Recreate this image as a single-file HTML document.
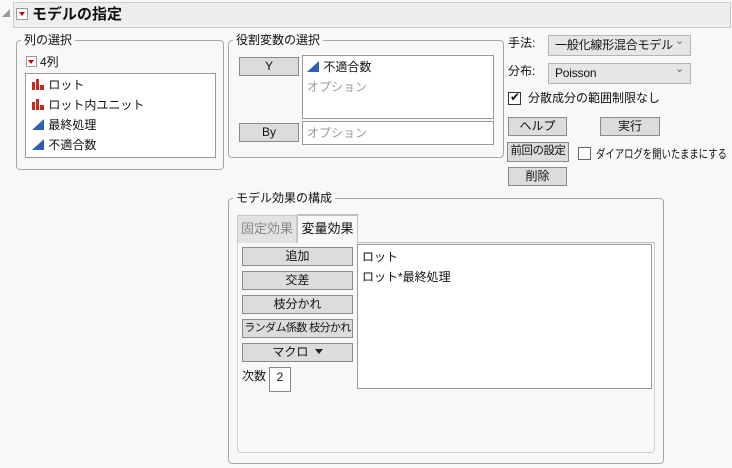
<!DOCTYPE html>
<html><head><meta charset="utf-8"><style>
*{box-sizing:border-box;margin:0;padding:0;white-space:nowrap}
body{width:732px;height:468px;background:#f8f8f8;font-family:"Liberation Sans","Noto Sans CJK JP",sans-serif;font-size:12px;color:#111;position:relative;overflow:hidden}
.a{position:absolute}
.grp{position:absolute;border:1px solid #a8a8a8;border-radius:4px}
.lg{position:absolute;background:#f8f8f8;padding:0 3px;top:-9px;left:4px;font-size:12px;line-height:16px}
.box{position:absolute;background:#fff;border:1px solid #999}
.btn{position:absolute;background:#dcdcdc;border:1px solid #8a8a8a;text-align:center;font-size:12px;line-height:16px;overflow:hidden}
.it{position:absolute;left:6px;line-height:16px}
.dd{position:absolute;background:#e6e6e6;border:1px solid #b4b4b4;line-height:18px;padding-left:6px;font-size:12px;letter-spacing:-0.2px}
.dd:after{content:"⌄";position:absolute;right:6px;top:-4px;color:#666;font-size:11px}
.cb{position:absolute;width:13px;height:13px;background:#fff;border:1px solid #333}
.gray{color:#999}
</style></head><body>
<div class="a" style="left:2px;top:9px;width:0;height:0;border-left:8px solid transparent;border-bottom:8px solid #999"></div>
<div class="a" style="left:13px;top:2px;width:718px;height:26px;background:#eeeeee;border:1px solid #ccc"></div>
<div class="a" style="left:16px;top:8px;width:12px;height:12px;background:#fff;border:1px solid #999"><div class="a" style="left:2px;top:3px;border-left:3px solid transparent;border-right:3px solid transparent;border-top:4px solid #d40000"></div></div>
<div class="a" style="left:32px;top:5px;font-size:15px;font-weight:bold;line-height:20px">モデルの指定</div>

<div class="grp" style="left:16px;top:40px;width:208px;height:130px"><div class="lg">列の選択</div></div>
<div class="a" style="left:26px;top:56px;width:11px;height:11px;background:#fff;border:1px solid #999"><div class="a" style="left:1px;top:3px;border-left:3.5px solid transparent;border-right:3.5px solid transparent;border-top:4px solid #d40000"></div></div>
<div class="a" style="left:40px;top:54px;line-height:16px">4列</div>
<div class="box" style="left:25px;top:73px;width:191px;height:85px">
<div class="it" style="top:3px"><svg width="13" height="11" style="vertical-align:-1px"><rect x="0" y="3" width="3" height="8" fill="#c8281e"/><rect x="4" y="0" width="3" height="11" fill="#c8281e"/><rect x="8" y="6" width="4" height="5" fill="#c8281e"/></svg> ロット</div>
<div class="it" style="top:23px"><svg width="13" height="11" style="vertical-align:-1px"><rect x="0" y="3" width="3" height="8" fill="#c8281e"/><rect x="4" y="0" width="3" height="11" fill="#c8281e"/><rect x="8" y="6" width="4" height="5" fill="#c8281e"/></svg> ロット内ユニット</div>
<div class="it" style="top:43px"><svg width="13" height="11" style="vertical-align:-1px"><polygon points="0,11 12,0 12,11" fill="#2f5fb3"/></svg> 最終処理</div>
<div class="it" style="top:63px"><svg width="13" height="11" style="vertical-align:-1px"><polygon points="0,11 12,0 12,11" fill="#2f5fb3"/></svg> 不適合数</div>
</div>

<div class="grp" style="left:228px;top:40px;width:276px;height:118px"><div class="lg">役割変数の選択</div></div>
<div class="btn" style="left:239px;top:57px;width:60px;height:19px">Y</div>
<div class="box" style="left:302px;top:55px;width:192px;height:64px">
<div class="it" style="top:3px;left:4px"><svg width="13" height="11" style="vertical-align:-1px"><polygon points="0,11 12,0 12,11" fill="#2f5fb3"/></svg> 不適合数</div>
<div class="it gray" style="top:23px;left:4px">オプション</div></div>
<div class="btn" style="left:239px;top:123px;width:60px;height:19px">By</div>
<div class="box" style="left:302px;top:121px;width:192px;height:24px"><div class="it gray" style="top:3px;left:4px">オプション</div></div>

<div class="a" style="left:508px;top:35px;line-height:16px">手法:</div>
<div class="dd" style="left:548px;top:35px;width:143px;height:21px">一般化線形混合モデル</div>
<div class="a" style="left:508px;top:63px;line-height:16px">分布:</div>
<div class="dd" style="left:548px;top:63px;width:143px;height:21px">Poisson</div>
<div class="cb" style="left:508px;top:92px"><span class="a" style="left:1px;top:-3px;font-size:12px">✔</span></div>
<div class="a" style="left:528px;top:90px;line-height:16px">分散成分の範囲制限なし</div>
<div class="btn" style="left:508px;top:117px;width:59px;height:19px">ヘルプ</div>
<div class="btn" style="left:600px;top:117px;width:60px;height:19px">実行</div>
<div class="btn" style="left:507px;top:142px;width:62px;height:20px;letter-spacing:-0.5px;font-size:11.5px">前回の設定</div>
<div class="cb" style="left:578px;top:147px;border-color:#666"></div>
<div class="a" style="left:596px;top:146px;line-height:16px;font-size:12px;transform:scaleX(0.78);transform-origin:0 0">ダイアログを開いたままにする</div>
<div class="btn" style="left:508px;top:167px;width:59px;height:19px">削除</div>

<div class="grp" style="left:228px;top:198px;width:436px;height:266px"><div class="lg">モデル効果の構成</div></div>
<div class="a" style="left:237px;top:242px;width:418px;height:211px;border:1px solid #d0d0d0;border-top-color:#bbb;border-radius:0 0 4px 4px"></div>
<div class="a" style="left:237px;top:215px;width:60px;height:28px;background:#e2e2e2;border:1px solid #c8c8c8;border-bottom:none;color:#888;text-align:center;line-height:26px;font-size:13px">固定効果</div>
<div class="a" style="left:297px;top:214px;width:61px;height:29px;background:#f8f8f8;border:1px solid #c8c8c8;border-top:2px solid #c0c0c0;border-bottom:none;text-align:center;line-height:26px;font-size:13px">変量効果</div>
<div class="btn" style="left:242px;top:247px;width:111px;height:19px">追加</div>
<div class="btn" style="left:242px;top:271px;width:111px;height:19px">交差</div>
<div class="btn" style="left:242px;top:295px;width:111px;height:19px">枝分かれ</div>
<div class="btn" style="left:242px;top:319px;width:111px;height:19px;font-size:11px;letter-spacing:-0.6px">ランダム係数 枝分かれ</div>
<div class="btn" style="left:242px;top:343px;width:111px;height:19px">マクロ <span style="display:inline-block;border-left:4px solid transparent;border-right:4px solid transparent;border-top:5px solid #222;vertical-align:2px;margin-left:3px"></span></div>
<div class="a" style="left:242px;top:368px;line-height:16px">次数</div>
<div class="box" style="left:269px;top:367px;width:22px;height:25px;border-color:#888;text-align:center;line-height:18px">2</div>
<div class="box" style="left:357px;top:244px;width:295px;height:145px">
<div class="it" style="top:4px;left:4px">ロット</div>
<div class="it" style="top:24px;left:4px">ロット*最終処理</div></div>
</body></html>
